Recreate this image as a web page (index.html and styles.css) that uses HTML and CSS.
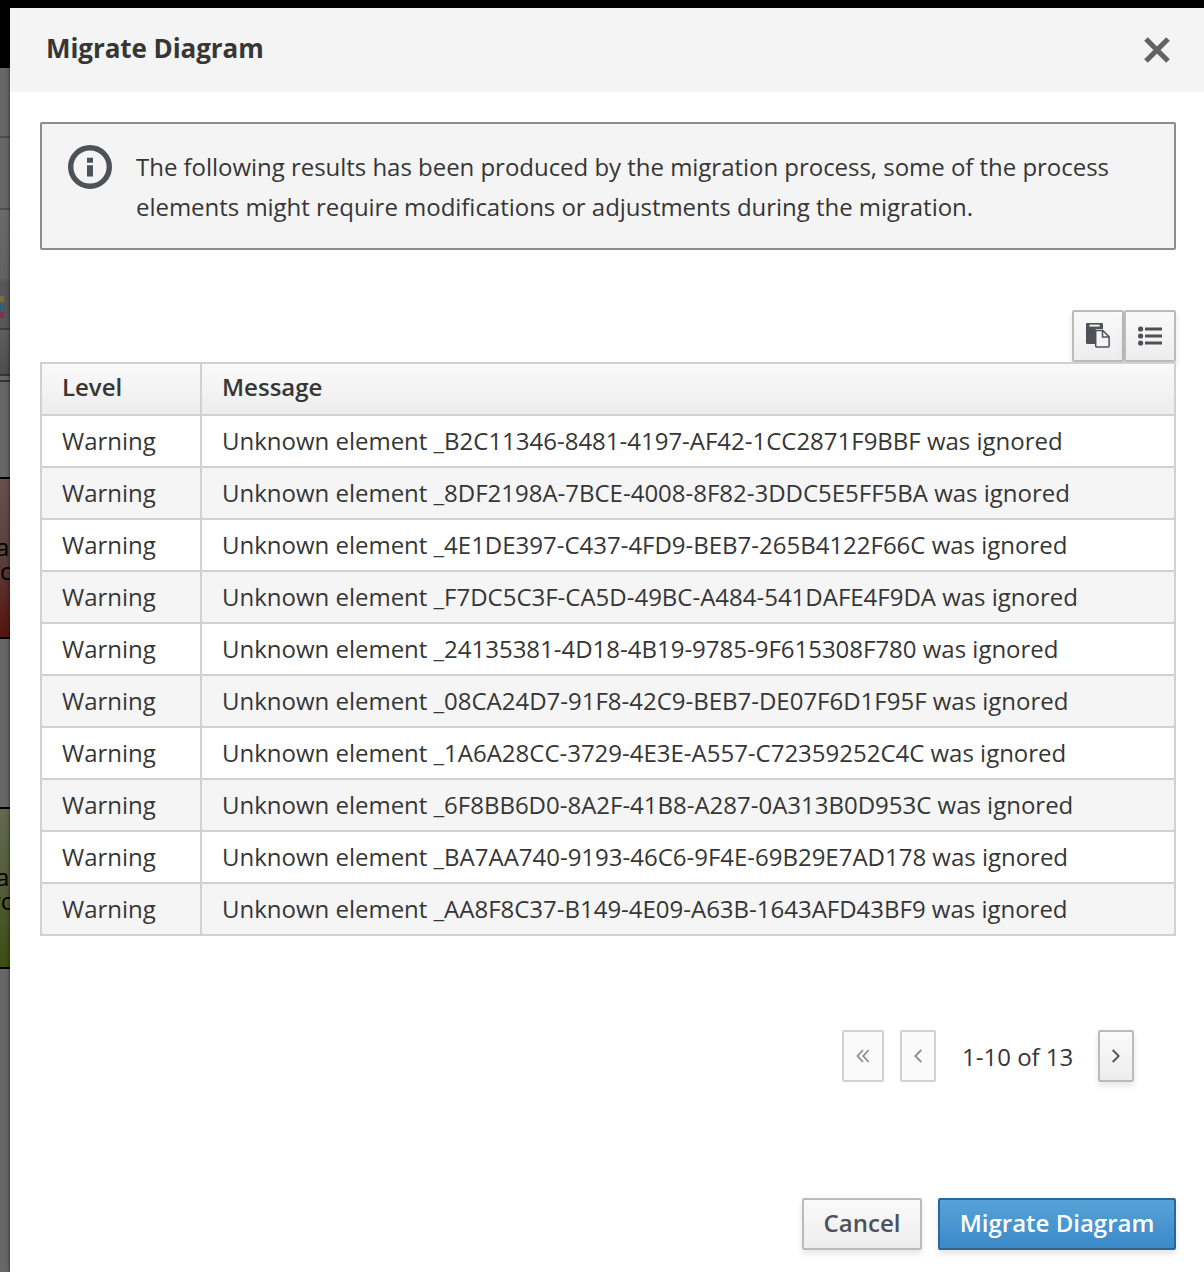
FILE: index.html
```html
<!DOCTYPE html>
<html lang="en">
<head>
<meta charset="utf-8">
<title>Migrate Diagram</title>
<link rel="stylesheet" href="styles.css">
</head>
<body>
<div class="screen">
  <aside class="editor">
    <div class="masthead"></div>
    <div class="bar bar-tabs"></div>
    <div class="bar bar-title"></div>
    <div class="bar bar-tools"></div>
    <div class="bar bar-palette"><i class="swatch yellow"></i><i class="swatch blue"></i><i class="swatch pink"></i></div>
    <div class="bar bar-sub"></div>
    <div class="bar bar-rule"></div>
    <div class="task task-red"><span>a</span><span class="second">c</span></div>
    <div class="task task-green"><span>a</span><span class="second wide">ro</span></div>
  </aside>
  <main class="modal">
    <header class="modal-header">
      <h1>Migrate Diagram</h1>
      <button class="close" aria-label="Close"><svg width="26" height="26" viewBox="0 0 26 26"><path d="M2 2L24 24M24 2L2 24" stroke="#636363" stroke-width="5.2" fill="none"/></svg></button>
    </header>
    <section class="modal-body">
      <div class="alert">
        <svg width="44" height="44" viewBox="0 0 44 44"><circle cx="22" cy="22" r="19.3" fill="none" stroke="#4d5258" stroke-width="5.4"/><path d="M19 12.7h6v5.1h-6zM19 20.2h6v11.3h-6z" fill="#4d5258"/></svg>
        <p>The following results has been produced by the migration process, some of the process<br>elements might require modifications or adjustments during the migration.</p>
      </div>
      <div class="toolbar">
        <button class="btn tool" aria-label="Copy"><svg width="24" height="25" viewBox="0 0 24 25"><path d="M1.2 0H15.8Q17 0 17 1.2V6H11Q9 6 9 8V21H1.2Q0 21 0 19.8V1.2Q0 0 1.2 0Z" fill="#4d5258"/><path d="M3.5 1.6h10.2v2H3.5z" fill="#f5f5f5"/><path d="M9.7 7.5H16.8L23.1 13.8V23Q23.1 23.9 22.2 23.9H10.5Q9.7 23.9 9.7 23V7.5ZM16.5 7.5V14H23" fill="#f5f5f5" stroke="#4d5258" stroke-width="1.5"/></svg></button>
        <button class="btn tool" aria-label="List"><svg width="24" height="20" viewBox="0 0 24 20"><g fill="#4d5258"><circle cx="2.6" cy="3" r="2.6"/><circle cx="2.6" cy="10" r="2.6"/><circle cx="2.6" cy="17" r="2.6"/><path d="M7 1.5h17v3H7zM7 8.5h17v3H7zM7 15.5h17v3H7z"/></g></svg></button>
      </div>
      <table class="results">
        <thead><tr><th class="level">Level</th><th>Message</th></tr></thead>
        <tbody>
          <tr><td>Warning</td><td>Unknown element _B2C11346-8481-4197-AF42-1CC2871F9BBF was ignored</td></tr>
          <tr><td>Warning</td><td>Unknown element _8DF2198A-7BCE-4008-8F82-3DDC5E5FF5BA was ignored</td></tr>
          <tr><td>Warning</td><td>Unknown element _4E1DE397-C437-4FD9-BEB7-265B4122F66C was ignored</td></tr>
          <tr><td>Warning</td><td>Unknown element _F7DC5C3F-CA5D-49BC-A484-541DAFE4F9DA was ignored</td></tr>
          <tr><td>Warning</td><td>Unknown element _24135381-4D18-4B19-9785-9F615308F780 was ignored</td></tr>
          <tr><td>Warning</td><td>Unknown element _08CA24D7-91F8-42C9-BEB7-DE07F6D1F95F was ignored</td></tr>
          <tr><td>Warning</td><td>Unknown element _1A6A28CC-3729-4E3E-A557-C72359252C4C was ignored</td></tr>
          <tr><td>Warning</td><td>Unknown element _6F8BB6D0-8A2F-41B8-A287-0A313B0D953C was ignored</td></tr>
          <tr><td>Warning</td><td>Unknown element _BA7AA740-9193-46C6-9F4E-69B29E7AD178 was ignored</td></tr>
          <tr><td>Warning</td><td>Unknown element _AA8F8C37-B149-4E09-A63B-1643AFD43BF9 was ignored</td></tr>
        </tbody>
      </table>
      <nav class="pager">
        <button class="btn first" disabled aria-label="First page"><svg width="14" height="14" viewBox="0 0 14 14"><path d="M7 1L1.5 7L7 13M12.7 1L7.2 7L12.7 13"/></svg></button>
        <button class="btn step" disabled aria-label="Previous page"><svg width="10" height="14" viewBox="0 0 10 14"><path d="M8.3 1L2.3 7L8.3 13"/></svg></button>
        <span class="range">1-10 of 13</span>
        <button class="btn step" aria-label="Next page"><svg width="10" height="14" viewBox="0 0 10 14"><path d="M1.7 1L7.7 7L1.7 13"/></svg></button>
      </nav>
    </section>
    <footer class="modal-footer">
      <button class="btn cancel">Cancel</button>
      <button class="btn primary">Migrate Diagram</button>
    </footer>
  </main>
</div>
</body>
</html>
```
FILE: styles.css
```css
* { box-sizing: border-box; }
body { margin: 0; background: #000; color: #363636; font: 24px/40px "Open Sans", sans-serif; }
button { font: inherit; cursor: pointer; }
svg { display: block; flex: none; }
.screen { display: flex; width: 1204px; height: 1272px; overflow: hidden; }

/* Dimmed editor behind the dialog */
.editor { width: 10px; flex: none; overflow: hidden; background: #676767; display: flex; flex-direction: column; }
.masthead { height: 68px; background: #000; }
.bar { border-bottom: 2px solid #4f4f4f; }
.bar-tabs { height: 70px; }
.bar-title { height: 72px; }
.bar-tools { height: 71px; border-color: #5c5c5c; background: linear-gradient(#6a6a6a, #626262); }
.bar-palette { height: 49px; padding-top: 15px; background: #575757; border-color: #404040; display: flex; flex-direction: column; gap: 2px; }
.swatch { width: 4px; height: 6px; flex: none; }
.yellow { background: #77703a; }
.blue { background: #345f7e; }
.pink { background: #79344f; }
.bar-sub { height: 46px; background: linear-gradient(#5e5e5e, #4d4d4d); border-color: #353535; }
.bar-rule { height: 6px; border-color: #353535; }
.task { height: 162px; flex: none; border: solid #000; border-width: 2px 0; padding-top: 56px; color: #000; font-size: 24px; line-height: 24px; overflow: hidden; white-space: nowrap; }
.task span { display: block; margin-left: -4px; }
.task .second { margin-left: 0; }
.task .wide { margin-left: -9px; }
.task-red { margin-top: 95px; background: linear-gradient(170deg, #69504c, #5c4340 45%, #56120c); }
.task-green { margin-top: 168px; background: linear-gradient(170deg, #64694f, #555d3b 45%, #3b4d12); }

/* Dialog */
.modal { flex: 1; margin-top: 8px; background: #fff; display: flex; flex-direction: column; box-shadow: 0 0 4px rgba(0, 0, 0, .65); position: relative; }
.modal-header { height: 84px; padding: 0 34px 0 36px; background: #f4f4f4; display: flex; justify-content: space-between; align-items: center; }
.modal-header h1 { margin: 0 0 4px; font-size: 26px; font-weight: 700; line-height: 36px; letter-spacing: -.07px; }
.close { padding: 0; border: 0; background: none; }
.modal-body { padding: 30px 28px 0 30px; }
.alert { height: 128px; padding: 21px 26px; border: 2px solid #8b8d8f; border-radius: 2px; background: #f4f4f4; display: flex; gap: 24px; }
.alert p { margin: 2px 0 0; white-space: nowrap; letter-spacing: -.03px; }
.btn { display: flex; align-items: center; justify-content: center; height: 52px; padding: 0; border: 2px solid #bbb; border-radius: 2px; color: #4d5258; background: linear-gradient(#fafafa, #ededed); box-shadow: 0 4px 6px rgba(3, 3, 3, .1); }
.btn:disabled { background: #fafafa; border-color: #d1d1d1; box-shadow: none; color: #8b8d8f; }
.toolbar { display: flex; justify-content: flex-end; margin-top: 60px; }
.tool { width: 52px; padding-bottom: 1px; }
.results { width: 100%; border-collapse: collapse; table-layout: fixed; color: #363636; position: relative; }
.results th, .results td { height: 52px; padding: 0 20px; border: 2px solid #d1d1d1; text-align: left; line-height: 32px; white-space: nowrap; }
.results td { letter-spacing: -.01px; }
.results th { font-weight: 600; padding-bottom: 4px; }
.results thead tr { background: linear-gradient(#fafafa, #ededed); }
.results tbody tr:nth-child(even) { background: #f5f5f5; }
.results .level { width: 160px; }
.pager { margin: 94px 42px 0 0; display: flex; align-items: center; justify-content: flex-end; }
.pager svg { fill: none; stroke: currentColor; stroke-width: 1.8; }
.first { width: 42px; margin-right: 16px; }
.step { width: 36px; }
.range { width: 112px; margin: 2px 24px 0 26px; white-space: nowrap; }
.modal-footer { margin: auto 28px 22px; display: flex; justify-content: flex-end; gap: 16px; font-weight: 600; }
.cancel { width: 120px; padding-bottom: 2px; }
.primary { width: 238px; padding-bottom: 2px; color: #fff; border-color: #2b669a; background: linear-gradient(#57a3d8, #3b89c9); }
```
